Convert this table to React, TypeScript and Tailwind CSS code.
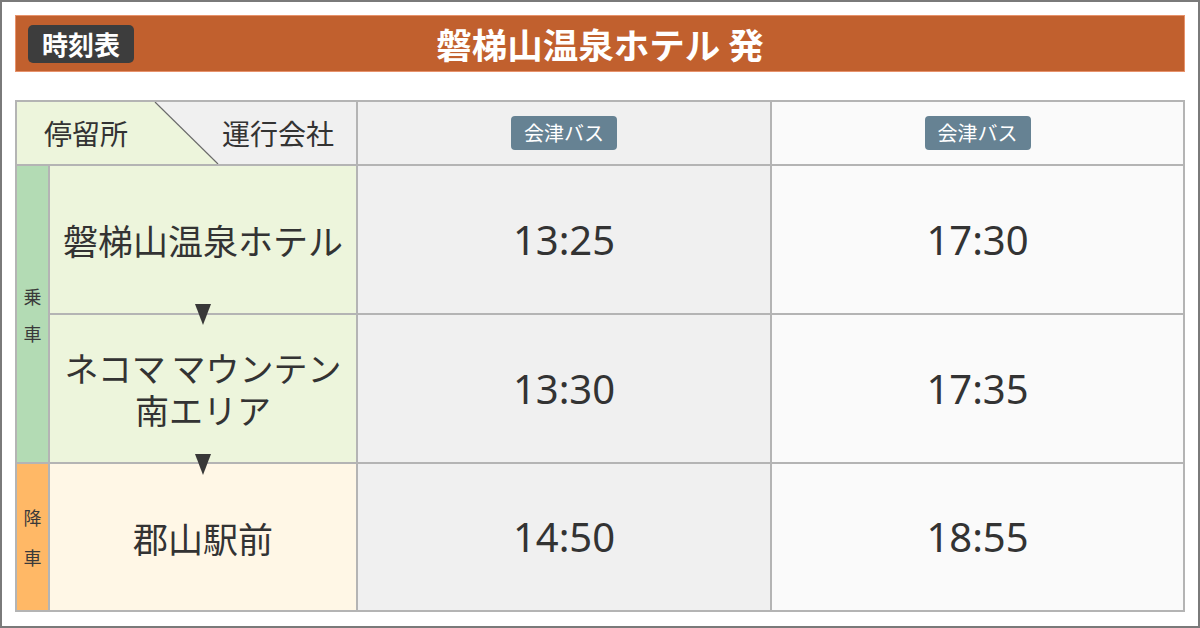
import React from "react";

const JP = { fontFamily: '"Noto Sans CJK JP", "Noto Sans", sans-serif' };
const NUM = { fontFamily: '"Noto Sans", "Open Sans", sans-serif' };

function Tri({ top }: { top: string }) {
  return (
    <svg
      width="16"
      height="21"
      viewBox="0 0 16 21"
      className={`absolute left-1/2 -translate-x-1/2 z-10 ${top}`}
    >
      <polygon points="0,0 16,0 8,21" fill="#383838" />
    </svg>
  );
}

function Badge() {
  return (
    <div className="w-[106px] h-[34px] rounded-[4px] bg-[#668293] text-white text-[20px] leading-none flex items-center justify-center">
      会津バス
    </div>
  );
}

function Time({ t, bg }: { t: string; bg: string }) {
  return (
    <div
      className={`${bg} flex items-center justify-center text-[40px] text-[#333] leading-none`}
      style={NUM}
    >
      {t}
    </div>
  );
}

export default function App() {
  return (
    <div
      className="w-[1200px] h-[628px] border-2 border-[#7a7a7a] bg-white px-[13px] pt-[13px]"
      style={JP}
    >
      <div className="h-[57px] bg-[#c1602e] border border-[#e7926b] grid grid-cols-[1fr_auto_1fr] items-center">
        <div className="pl-[12px]">
          <div className="w-[106px] h-[38px] rounded-[5px] bg-[#3d3d3d] text-white text-[26px] font-bold leading-none flex items-center justify-center">
            時刻表
          </div>
        </div>
        <div className="text-white text-[35.5px] font-bold leading-none">
          磐梯山温泉ホテル 発
        </div>
        <div />
      </div>

      <div className="mt-[28px] w-[1170px] grid grid-cols-[31px_306px_412px_411px] grid-rows-[62px_147px_147px_146px] gap-[2px] p-[2px] bg-[#b4b4b4] text-[#333]">
        <div className="col-span-2 relative bg-[#f0f0f0] flex items-center justify-between pl-[27px] pr-[22px] text-[28px] leading-none">
          <svg
            className="absolute inset-0"
            width="339"
            height="62"
            viewBox="0 0 339 62"
          >
            <polygon points="0,0 138,0 201,62 0,62" fill="#edf5dc" />
            <line x1="138" y1="0" x2="201" y2="62" stroke="#6a6a6a" strokeWidth="1.2" />
          </svg>
          <span className="relative">停留所</span>
          <span className="relative">運行会社</span>
        </div>
        <div className="bg-[#f0f0f0] flex items-center justify-center">
          <Badge />
        </div>
        <div className="bg-[#fafafa] flex items-center justify-center">
          <Badge />
        </div>

        <div className="row-span-2 bg-[#b3dbb4] flex flex-col items-center justify-center gap-[19px] text-[18px] leading-none text-[#3a3a3a]">
          <span>乗</span>
          <span>車</span>
        </div>
        <div className="bg-[#edf5dc] flex items-center justify-center text-[35px] leading-none">
          磐梯山温泉ホテル
        </div>
        <Time t="13:25" bg="bg-[#f0f0f0]" />
        <Time t="17:30" bg="bg-[#fafafa]" />

        <div className="relative bg-[#edf5dc] flex flex-col items-center justify-center text-[34px] leading-[42px]">
          <Tri top="-top-[11px]" />
          <span className="[word-spacing:-2px]">ネコマ マウンテン</span>
          <span>南エリア</span>
        </div>
        <Time t="13:30" bg="bg-[#f0f0f0]" />
        <Time t="17:35" bg="bg-[#fafafa]" />

        <div className="bg-[#ffb866] flex flex-col items-center justify-center gap-[22px] text-[18px] leading-none text-[#3a3a3a]">
          <span>降</span>
          <span>車</span>
        </div>
        <div className="relative bg-[#fff7e6] flex items-center justify-center text-[35px] leading-none">
          <Tri top="-top-[10px]" />
          郡山駅前
        </div>
        <Time t="14:50" bg="bg-[#f0f0f0]" />
        <Time t="18:55" bg="bg-[#fafafa]" />
      </div>
    </div>
  );
}
